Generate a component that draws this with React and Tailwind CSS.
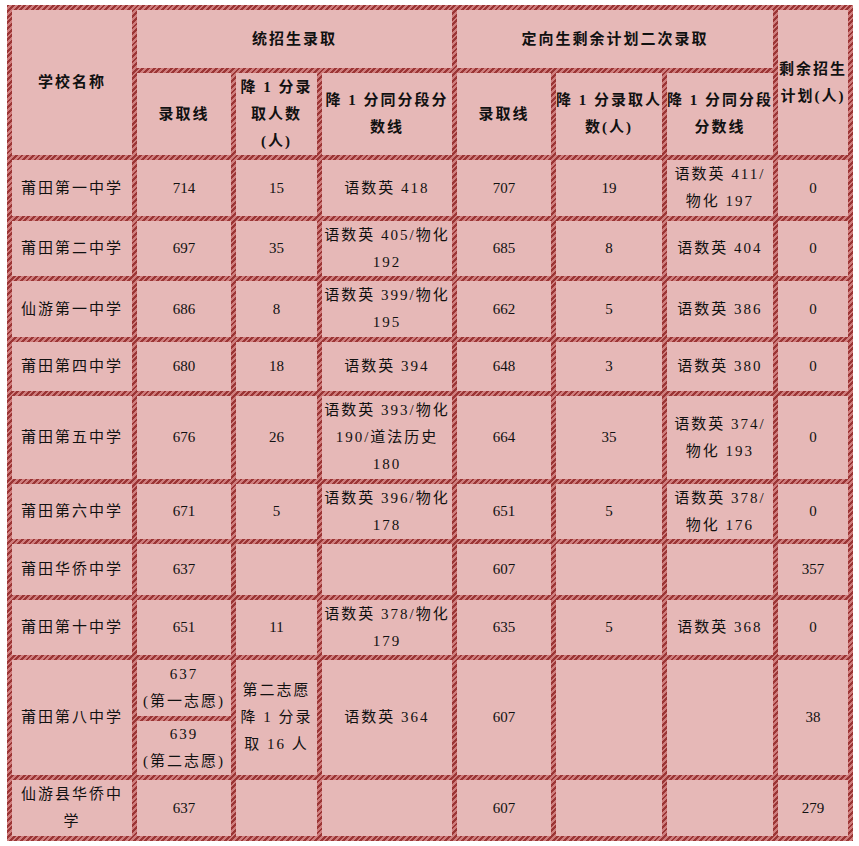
const stripe =
  'bg-[repeating-linear-gradient(135deg,#9b3535_0px,#9b3535_2px,#cf7e7e_2px,#cf7e7e_4px)]'

function Cell({ lines, className = '' }) {
  const numeric = lines.every((l) => /^\d*$/.test(l))
  return (
    <div
      className={`flex flex-col items-center justify-center bg-[#e6b8b7] text-center text-[15px] leading-[27px] text-[#111] ${numeric ? 'tracking-normal' : 'tracking-[2px]'} ${className}`}
    >
      {lines.map((l, i) => (
        <div key={i} className="whitespace-nowrap">
          {l}
        </div>
      ))}
    </div>
  )
}

function Head({ lines, className = '' }) {
  return <Cell lines={lines} className={`font-bold ${className}`} />
}

const rows = [
  ['莆田第一中学', '714', '15', ['语数英 418'], '707', '19', ['语数英 411/', '物化 197'], '0'],
  ['莆田第二中学', '697', '35', ['语数英 405/物化', '192'], '685', '8', ['语数英 404'], '0'],
  ['仙游第一中学', '686', '8', ['语数英 399/物化', '195'], '662', '5', ['语数英 386'], '0'],
  ['莆田第四中学', '680', '18', ['语数英 394'], '648', '3', ['语数英 380'], '0'],
  ['莆田第五中学', '676', '26', ['语数英 393/物化', '190/道法历史', '180'], '664', '35', ['语数英 374/', '物化 193'], '0'],
  ['莆田第六中学', '671', '5', ['语数英 396/物化', '178'], '651', '5', ['语数英 378/', '物化 176'], '0'],
  ['莆田华侨中学', '637', '', [''], '607', '', [''], '357'],
  ['莆田第十中学', '651', '11', ['语数英 378/物化', '179'], '635', '5', ['语数英 368'], '0'],
]

export default function App() {
  return (
    <div className="min-h-screen bg-white pl-[7px] pt-[5px] font-['Liberation_Serif','Noto_Sans_CJK_SC',serif]">
      <div
        className={`inline-grid grid-cols-[120px_94px_81px_130px_94px_106px_106px_70px] grid-rows-[58px_82px_56px_55px_56px_49px_83px_55px_51px_55px_56px_54px_56px] gap-[5px] p-[5px] ${stripe}`}
      >
        <Head lines={['学校名称']} className="row-span-2" />
        <Head lines={['统招生录取']} className="col-span-3" />
        <Head lines={['定向生剩余计划二次录取']} className="col-span-3" />
        <Head lines={['剩余招生', '计划(人)']} className="row-span-2 tracking-[1px]" />

        <Head lines={['录取线']} />
        <Head lines={['降 1 分录', '取人数', '(人)']} />
        <Head lines={['降 1 分同分段分', '数线']} className="tracking-[1px]" />
        <Head lines={['录取线']} />
        <Head lines={['降 1 分录取人', '数(人)']} className="tracking-[1px]" />
        <Head lines={['降 1 分同分段', '分数线']} className="tracking-[1px]" />

        {rows.map((r, i) =>
          r.map((c, j) => (
            <Cell key={`${i}-${j}`} lines={Array.isArray(c) ? c : [c]} />
          ))
        )}

        <Cell lines={['莆田第八中学']} className="row-span-2" />
        <Cell lines={['637', '(第一志愿)']} className="leading-[25px] tracking-[1px]" />
        <Cell lines={['第二志愿', '降 1 分录', '取 16 人']} className="row-span-2" />
        <Cell lines={['语数英 364']} className="row-span-2" />
        <Cell lines={['607']} className="row-span-2" />
        <Cell lines={['']} className="row-span-2" />
        <Cell lines={['']} className="row-span-2" />
        <Cell lines={['38']} className="row-span-2" />
        <Cell lines={['639', '(第二志愿)']} className="leading-[25px] tracking-[1px]" />

        <Cell lines={['仙游县华侨中', '学']} className="leading-[26px]" />
        <Cell lines={['637']} />
        <Cell lines={['']} />
        <Cell lines={['']} />
        <Cell lines={['607']} />
        <Cell lines={['']} />
        <Cell lines={['']} />
        <Cell lines={['279']} />
      </div>
    </div>
  )
}
